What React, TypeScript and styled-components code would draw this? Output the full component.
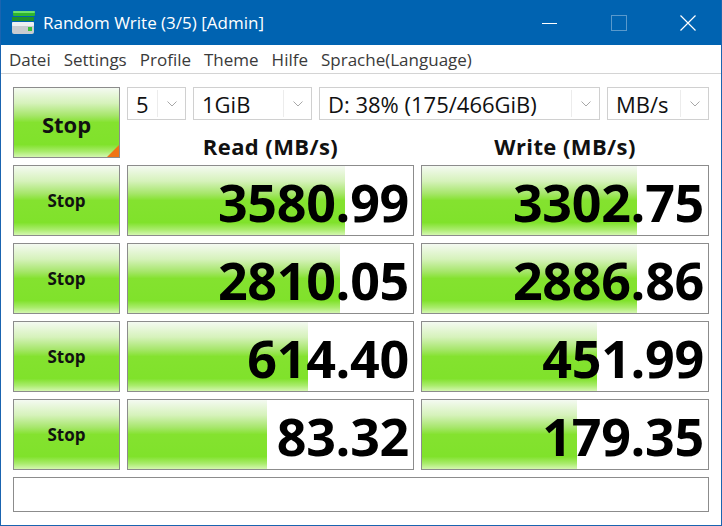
import React from 'react';
import styled, { createGlobalStyle } from 'styled-components';

const GlobalStyle = createGlobalStyle`
  html, body {
    margin: 0;
    padding: 0;
    background: #ffffff;
  }
  body {
    font-family: "Open Sans", "Noto Sans", sans-serif;
  }
`;

const BAR = `linear-gradient(to bottom,
  #f4faf1 0%,
  #d6f2bb 22%,
  #a6e66a 40%,
  #84e22f 50%,
  #80e22b 82%,
  #a9ec6c 92%,
  #d4f7b0 100%)`;

const Window = styled.div`
  width: 722px;
  height: 526px;
  box-sizing: border-box;
  border: 1px solid #1a64b0;
  border-top: none;
  display: flex;
  flex-direction: column;
  overflow: hidden;
`;

const TitleBar = styled.div`
  height: 45px;
  background: #0063b1;
  display: flex;
  align-items: center;
  color: #ffffff;
  margin: 0 -1px;
`;

const AppIcon = styled.svg`
  margin-left: 12px;
  margin-right: 7px;
  flex: none;
`;

const TitleText = styled.div`
  font-size: 17px;
  flex: 1;
`;

const WinButton = styled.div`
  width: 69px;
  height: 45px;
  display: flex;
  align-items: center;
  justify-content: center;
`;

const MenuBar = styled.div`
  height: 28px;
  border-bottom: 1px solid #d4d4d4;
  display: flex;
  align-items: center;
  padding-left: 8px;
`;

const MenuItem = styled.span`
  font-size: 17px;
  color: #3a3a3a;
  margin-right: 13px;
  letter-spacing: 0;
`;

const Body = styled.div`
  flex: 1;
  padding: 13px 12px 0 12px;
  display: grid;
  grid-template-columns: 107px 287px 288px;
  grid-template-rows: 33px 31px 71px 71px 71px 71px 35px;
  gap: 7px;
`;

const Button = styled.div<{ $big?: boolean }>`
  position: relative;
  box-sizing: border-box;
  border: 1px solid #8c8c8c;
  background: ${BAR};
  display: flex;
  align-items: center;
  justify-content: center;
  font-weight: 700;
  font-size: ${p => (p.$big ? '22px' : '17px')};
  color: #111;
  grid-row: ${p => (p.$big ? 'span 2' : 'auto')};
  padding-top: ${p => (p.$big ? '3px' : '0')};

  ${p =>
    p.$big &&
    `&::after {
      content: '';
      position: absolute;
      right: 0;
      bottom: 0;
      width: 0;
      height: 0;
      border-left: 12px solid transparent;
      border-bottom: 12px solid #f07414;
    }`}
`;

const Controls = styled.div`
  grid-column: 2 / 4;
  display: flex;
  gap: 7px;
`;

const Combo = styled.div<{ $w: number }>`
  width: ${p => p.$w}px;
  box-sizing: border-box;
  border: 1px solid #d0d0d0;
  display: flex;
  align-items: stretch;
  background: #fff;
`;

const ComboText = styled.div`
  flex: 1;
  display: flex;
  align-items: center;
  font-size: 22px;
  color: #111;
  border-right: 1px solid #ececec;
  margin: 2px 0 2px 2px;
  padding-left: 6px;
  letter-spacing: 0;
`;

const ComboArrow = styled.div`
  width: 27px;
  display: flex;
  align-items: center;
  justify-content: center;
`;

const Header = styled.div`
  display: flex;
  align-items: flex-end;
  justify-content: center;
  font-size: 22px;
  font-weight: 700;
  color: #111;
  line-height: 24px;
  letter-spacing: 0.4px;
`;

const Cell = styled.div`
  position: relative;
  box-sizing: border-box;
  border: 1px solid #8c8c8c;
  background: #fff;
  overflow: hidden;
`;

const Fill = styled.div`
  position: absolute;
  left: 0;
  top: 0;
  bottom: 0;
  background: ${BAR};
`;

const Value = styled.div`
  position: relative;
  height: 100%;
  display: flex;
  align-items: center;
  justify-content: flex-end;
  padding-right: 4px;
  padding-top: 2px;
  box-sizing: border-box;
  font-size: 52px;
  font-weight: 700;
  color: #000;
  letter-spacing: -0.3px;
`;

const Status = styled.div`
  grid-column: 1 / 4;
  box-sizing: border-box;
  border: 1px solid #8c8c8c;
  background: #fff;
`;

const Chevron = () => (
  <svg width="10" height="6" viewBox="0 0 10 6">
    <path d="M0.5 0.5 L5 5 L9.5 0.5" fill="none" stroke="#a8a8a8" strokeWidth="1" />
  </svg>
);

function ComboBox({ width, value }: { width: number; value: string }) {
  return (
    <Combo $w={width}>
      <ComboText>{value}</ComboText>
      <ComboArrow>
        <Chevron />
      </ComboArrow>
    </Combo>
  );
}

const rows = [
  { read: '3580.99', rf: 0.762, write: '3302.75', wf: 0.753 },
  { read: '2810.05', rf: 0.745, write: '2886.86', wf: 0.753 },
  { read: '614.40', rf: 0.632, write: '451.99', wf: 0.613 },
  { read: '83.32', rf: 0.489, write: '179.35', wf: 0.543 },
];

const menus = ['Datei', 'Settings', 'Profile', 'Theme', 'Hilfe', 'Sprache(Language)'];

export default function App() {
  return (
    <>
      <GlobalStyle />
      <Window>
        <TitleBar>
          <AppIcon width="24" height="24" viewBox="0 0 24 24">
            <rect x="1" y="0" width="22" height="5" rx="1" fill="#2fb52f" />
            <rect x="1" y="0" width="22" height="2" rx="1" fill="#6ee06e" />
            <rect x="0" y="6" width="22" height="4" fill="#1f8f2a" />
            <rect x="0" y="11" width="22" height="12" rx="2" fill="#c9ccd0" />
            <rect x="0" y="11" width="22" height="4" rx="1" fill="#eef0f2" />
            <rect x="16" y="16" width="4" height="4" fill="#3cc23c" />
          </AppIcon>
          <TitleText>Random Write (3/5) [Admin]</TitleText>
          <WinButton>
            <svg width="16" height="16" viewBox="0 0 16 16">
              <line x1="0" y1="8.5" x2="15" y2="8.5" stroke="#fff" strokeWidth="1" />
            </svg>
          </WinButton>
          <WinButton>
            <svg width="16" height="16" viewBox="0 0 16 16">
              <rect x="0.5" y="0.5" width="15" height="15" fill="none" stroke="rgba(255,255,255,0.35)" strokeWidth="1" />
            </svg>
          </WinButton>
          <WinButton>
            <svg width="16" height="16" viewBox="0 0 16 16">
              <path d="M0.5 0.5 L15.5 15.5 M15.5 0.5 L0.5 15.5" stroke="#fff" strokeWidth="1.2" />
            </svg>
          </WinButton>
        </TitleBar>
        <MenuBar>
          {menus.map(m => (
            <MenuItem key={m}>{m}</MenuItem>
          ))}
        </MenuBar>
        <Body>
          <Button $big>Stop</Button>
          <Controls>
            <ComboBox width={59} value="5" />
            <ComboBox width={119} value="1GiB" />
            <ComboBox width={281} value="D: 38% (175/466GiB)" />
            <ComboBox width={102} value="MB/s" />
          </Controls>
          <Header>Read (MB/s)</Header>
          <Header>Write (MB/s)</Header>
          {rows.map(r => (
            <React.Fragment key={r.read}>
              <Button>Stop</Button>
              <Cell>
                <Fill style={{ width: `${r.rf * 100}%` }} />
                <Value>{r.read}</Value>
              </Cell>
              <Cell>
                <Fill style={{ width: `${r.wf * 100}%` }} />
                <Value>{r.write}</Value>
              </Cell>
            </React.Fragment>
          ))}
          <Status />
        </Body>
      </Window>
    </>
  );
}
